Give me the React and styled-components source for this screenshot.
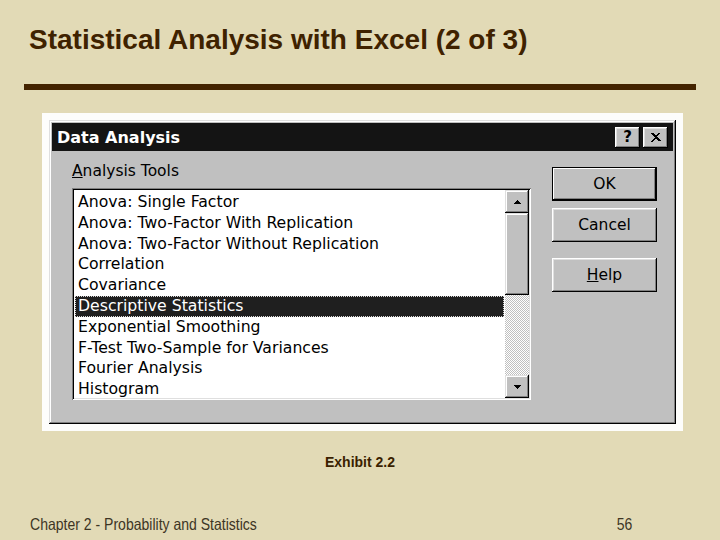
import React from 'react'
import styled, { createGlobalStyle } from 'styled-components'

const GlobalStyle = createGlobalStyle`
  html, body {
    margin: 0;
    padding: 0;
    background: #e2dab6;
  }
`;

const tools = [
  'Anova: Single Factor',
  'Anova: Two-Factor With Replication',
  'Anova: Two-Factor Without Replication',
  'Correlation',
  'Covariance',
  'Descriptive Statistics',
  'Exponential Smoothing',
  'F-Test Two-Sample for Variances',
  'Fourier Analysis',
  'Histogram',
]

const App = () => (
  <Slide>
    <GlobalStyle />
    <Heading>Statistical Analysis with Excel (2 of 3)</Heading>
    <Rule />
    <Frame>
      <Dialog>
        <TitleBar>
          <TitleText>Data Analysis</TitleText>
          <TitleButtons>
            <TitleButton>?</TitleButton>
            <TitleButton>
              <svg width="10" height="9" viewBox="0 0 10 9">
                <path d="M1 0h2v1h1v1h2V1h1V0h2v1H8v1H7v1H6v1h1v1h1v1h1v1h1v1H8V8H7V7H6V6H4v1H3v1H2v1H0V8h1V7h1V6h1V5h1V4H3V3H2V2H1V1H0V0z" fill="#000" />
              </svg>
            </TitleButton>
          </TitleButtons>
        </TitleBar>
        <DialogBody>
          <ToolsColumn>
            <FieldLabel><u>A</u>nalysis Tools</FieldLabel>
            <ListBox>
              <Items>
                {tools.map((t) => (
                  <Item key={t} selected={t === 'Descriptive Statistics'}>{t}</Item>
                ))}
              </Items>
              <ScrollBar>
                <ArrowButton>
                  <svg width="7" height="4" viewBox="0 0 7 4"><path d="M3 0h1v1h1v1h1v1h1v1H0V3h1V2h1V1h1z" fill="#000" /></svg>
                </ArrowButton>
                <Thumb />
                <Track />
                <ArrowButton>
                  <svg width="7" height="4" viewBox="0 0 7 4"><path d="M0 0h7v1H6v1H5v1H4v1H3V3H2V2H1V1H0z" fill="#000" /></svg>
                </ArrowButton>
              </ScrollBar>
            </ListBox>
          </ToolsColumn>
          <ButtonColumn>
            <PushButton primary>OK</PushButton>
            <PushButton>Cancel</PushButton>
            <PushButton gap><u>H</u>elp</PushButton>
          </ButtonColumn>
        </DialogBody>
      </Dialog>
    </Frame>
    <Caption>Exhibit 2.2</Caption>
    <Footer>
      <FooterText>Chapter 2 - Probability and Statistics</FooterText>
      <FooterText right>56</FooterText>
    </Footer>
  </Slide>
)

const Slide = styled.div`
  width: 720px;
  height: 540px;
  overflow: hidden;
  display: flex;
  flex-direction: column;
  background: #e2dab6;
  color: #3f2200;
`;

const Heading = styled.h1`
  margin: 23px 0 0 29px;
  font-family: "Liberation Sans", Arial, sans-serif;
  font-weight: bold;
  font-size: 28px;
  line-height: 34px;
  color: #3f2200;
`;

const Rule = styled.div`
  height: 6px;
  margin: 27px 24px 0 24px;
  background: #442400;
`;

const Frame = styled.div`
  width: 627px;
  margin: 23px 0 0 42px;
  padding: 7px;
  background: #fdfdfb;
`;

const Dialog = styled.div`
  background: #c0c0c0;
  padding: 3px;
  box-shadow: inset -1px -1px #000, inset 1px 1px #dfdfdf, inset -2px -2px #808080, inset 2px 2px #fff;
  font-family: "DejaVu Sans", Verdana, sans-serif;
`;

const TitleBar = styled.div`
  height: 28px;
  display: flex;
  align-items: center;
  justify-content: space-between;
  background: #141414;
  padding: 0 5px 0 5px;
`;

const TitleText = styled.span`
  color: #fff;
  font-weight: bold;
  font-size: 16px;
`;

const TitleButtons = styled.div`
  display: flex;
  gap: 3px;
`;

const TitleButton = styled.div`
  width: 25px;
  height: 21px;
  display: flex;
  align-items: center;
  justify-content: center;
  background: #c0c0c0;
  box-shadow: inset -1px -1px #000, inset 1px 1px #fff, inset -2px -2px #808080, inset 2px 2px #dfdfdf;
  font-weight: bold;
  font-size: 15px;
  color: #000;
`;

const DialogBody = styled.div`
  display: flex;
  gap: 21px;
  padding: 10px 16px 21px 20px;
`;

const ToolsColumn = styled.div`
  display: flex;
  flex-direction: column;
`;

const FieldLabel = styled.div`
  font-size: 15.5px;
  line-height: 20px;
  color: #000;
  margin-bottom: 7px;
`;

const ListBox = styled.div`
  width: 459px;
  height: 212px;
  box-sizing: border-box;
  padding: 2px;
  display: flex;
  background: #fff;
  box-shadow: inset 1px 1px #808080, inset -1px -1px #fff, inset 2px 2px #000, inset -2px -2px #dfdfdf;
`;

const Items = styled.div`
  flex: 1;
  overflow: hidden;
  padding: 2px 1px 0 1px;
`;

const Item = styled.div`
  height: 20.8px;
  line-height: 20.8px;
  padding-left: 3px;
  font-size: 15.7px;
  white-space: nowrap;
  color: ${(p) => (p.selected ? '#fff' : '#000')};
  background: ${(p) => (p.selected ? '#1f1f1f' : 'transparent')};
  outline: ${(p) => (p.selected ? '1px dotted #d8d8d8' : 'none')};
  outline-offset: -1px;
`;

const ScrollBar = styled.div`
  width: 24px;
  display: flex;
  flex-direction: column;
`;

const ArrowButton = styled.div`
  height: 23px;
  display: flex;
  align-items: center;
  justify-content: center;
  background: #c0c0c0;
  box-shadow: inset -1px -1px #000, inset 1px 1px #dfdfdf, inset -2px -2px #808080, inset 2px 2px #fff;
`;

const Thumb = styled(ArrowButton)`
  height: 82px;
`;

const Track = styled.div`
  flex: 1;
  background: repeating-conic-gradient(#fff 0 25%, #c0c0c0 0 50%) 0 0 / 2px 2px;
`;

const ButtonColumn = styled.div`
  display: flex;
  flex-direction: column;
  gap: 7px;
  padding-top: 6px;
`;

const PushButton = styled.div`
  width: 105px;
  height: 34px;
  box-sizing: border-box;
  display: flex;
  align-items: center;
  justify-content: center;
  margin-top: ${(p) => (p.gap ? '9px' : '0')};
  background: #c0c0c0;
  font-size: 15.5px;
  color: #000;
  box-shadow: ${(p) =>
    p.primary
      ? 'inset -1px -1px #000, inset 1px 1px #000, inset -2px -2px #000, inset 2px 2px #fff, inset -3px -3px #808080'
      : 'inset -1px -1px #000, inset 1px 1px #fff, inset -2px -2px #808080, inset 2px 2px #dfdfdf'};
`;

const Caption = styled.div`
  margin-top: 22px;
  text-align: center;
  font-family: "Liberation Sans", Arial, sans-serif;
  font-weight: bold;
  font-size: 14px;
  line-height: 18px;
  color: #3a1f00;
`;

const Footer = styled.div`
  display: flex;
  justify-content: space-between;
  margin: 43px 88px 0 30px;
  font-family: "Liberation Sans", Arial, sans-serif;
  font-size: 16.5px;
  line-height: 20px;
  color: #3d3524;
`;

const FooterText = styled.span`
  display: inline-block;
  transform: scaleX(0.85);
  transform-origin: ${(p) => (p.right ? 'right' : 'left')} center;
`;

export default App
